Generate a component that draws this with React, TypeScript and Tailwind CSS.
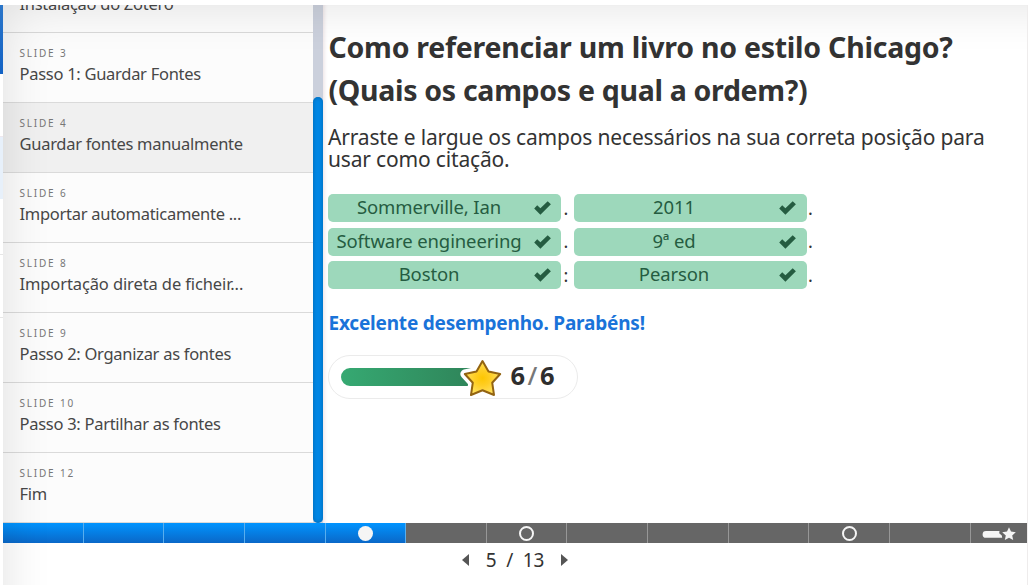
const slides = [
  { label: "SLIDE 3", title: "Passo 1: Guardar Fontes" },
  { label: "SLIDE 4", title: "Guardar fontes manualmente", active: true },
  { label: "SLIDE 6", title: "Importar automaticamente ..." },
  { label: "SLIDE 8", title: "Importação direta de ficheir...", tracking: "tracking-[-0.11px]" },
  { label: "SLIDE 9", title: "Passo 2: Organizar as fontes" },
  { label: "SLIDE 10", title: "Passo 3: Partilhar as fontes" },
  { label: "SLIDE 12", title: "Fim" },
];

const answers = [
  [["Sommerville, Ian", "."], ["2011", "."]],
  [["Software engineering", "."], ["9ª ed", "."]],
  [["Boston", ":"], ["Pearson", "."]],
];

type SlideProps = { label: string; title: string; active?: boolean; tracking?: string };

function SlideLink({ label, title, active, tracking = "tracking-[-0.28px]" }: SlideProps) {
  return (
    <li className={`flex h-[70px] shrink-0 flex-col border-b border-[#dadada] pl-[16.5px] ${active ? "bg-[#f0f0f0]" : ""}`}>
      <span className="mt-[13px] h-[16px] text-[10px] leading-[15px] tracking-[1.8px] text-[#777]">{label}</span>
      <span className={`h-[24px] text-[16.5px] leading-[24px] whitespace-nowrap text-[#474747] ${tracking}`}>{title}</span>
    </li>
  );
}

function Answer({ text, mark, last }: { text: string; mark: string; last: boolean }) {
  return (
    <div className="flex w-[246px] items-center">
      <div className="flex h-[28px] w-[233px] items-center rounded-[5px] bg-[#9dd8bb] text-[#255c41]">
        <span className={`-mt-[2px] text-center text-[18.5px] leading-[26px] tracking-[-0.12px] ${last ? "w-[200px]" : "w-[202px]"}`}>
          {text}
        </span>
        <svg viewBox="0 0 17 14" className={`h-[14px] w-[17px] ${last ? "ml-[4.5px]" : "ml-[3.5px]"}`}>
          <path d="M0.2 7.4 3.2 4.2 6.4 7.2 13.7 0.2 16.9 3.3 6.4 13.8Z" fill="currentColor" />
        </svg>
      </div>
      <span className={`-mt-px text-[18px] leading-[24px] text-[#333] ${last ? "ml-[1px]" : "ml-[2.5px]"}`}>{mark}</span>
    </div>
  );
}

function Segment({ index }: { index: number }) {
  const done = index < 5;
  return (
    <div
      className={`flex h-full items-center justify-center ${index === 12 ? "flex-1" : "w-[80.63px] shrink-0 border-r"} ${
        done ? "border-[#58aeee] bg-linear-to-b from-[#0094ff] to-[#0a68c8]" : "border-[#979797] bg-[#666]"
      }`}
    >
      {index === 4 && <span className="mt-[1px] ml-[1px] size-[15px] rounded-full bg-[#f5f5f5]" />}
      {(index === 6 || index === 10) && <span className="mt-[1px] size-[15px] rounded-full border-2 border-[#f5f5f5]" />}
      {index === 12 && (
        <svg viewBox="0 0 34 14" className="mt-[2px] h-[14px] w-[34px]" fill="#f5f5f5">
          <path d="M4 4H17.5L17.2 6.3 19.8 8.5 20.2 10.8H4A3.4 3.4 0 0 1 4 4Z" />
          <path d="M27 0.2 29 4.6 33.8 5.2 30.2 8.4 31.2 13.1 27 10.7 22.8 13.1 23.8 8.4 20.2 5.2 25 4.6Z" />
        </svg>
      )}
    </div>
  );
}

function Score() {
  return (
    <div className="mt-[19px] flex h-[44px] w-[250px] items-center rounded-full border border-[#ebebeb] pl-[12px]">
      <svg viewBox="0 0 162 42" className="h-[42px] w-[162px] shrink-0">
        <defs>
          <linearGradient id="bar" x1="0" x2="1">
            <stop offset="0" stopColor="#36a972" />
            <stop offset="1" stopColor="#2f855a" />
          </linearGradient>
          <radialGradient id="star">
            <stop offset="0" stopColor="#fdc602" />
            <stop offset="0.45" stopColor="#ffce25" />
            <stop offset="1" stopColor="#ffe15e" />
          </radialGradient>
        </defs>
        <path d="M9 12H130V30H9A9 9 0 0 1 9 12Z" fill="url(#bar)" />
        <path
          d="M141.5 5 147.5 15.5 159.2 18 151.2 26.7 153 39 141.5 34.3 130 39 131.8 26.7 123.8 18 135.5 15.5Z"
          fill="#fff" stroke="#fff" strokeWidth="9" strokeLinejoin="round"
        />
        <path
          d="M141.5 5 147.5 15.5 159.2 18 151.2 26.7 153 39 141.5 34.3 130 39 131.8 26.7 123.8 18 135.5 15.5Z"
          fill="url(#star)" stroke="#936412" strokeWidth="2" strokeLinejoin="round"
        />
      </svg>
      <div className="mb-[4px] ml-[7.5px] flex text-[25.5px] leading-[38px] font-bold text-[#2e2e2e]">
        <span>6</span>
        <span className="mx-[2.5px] font-medium text-[#777]">/</span>
        <span>6</span>
      </div>
    </div>
  );
}

export default function App() {
  return (
    <div className="flex h-[585px] w-[1032px] overflow-hidden bg-white pt-[5px] font-['Noto_Sans','Open_Sans',sans-serif]">
      <div className="flex w-[3px] shrink-0 flex-col">
        <div className="h-[69px] bg-linear-to-b from-[#2b76c9] to-[#1262c4]" />
        <div className="h-[62px]" />
        <div className="h-[63px] border-t border-[#eee7ee] bg-[#e7f0fa]" />
        <div className="h-[56px] border-b border-[#e6e6e6]" />
        <div className="h-[63px] border-b border-[#e6e6e6]" />
      </div>
      <div className="relative flex w-[1025px] shrink-0 flex-col border-r border-[#eeecec]">
        <div className="flex h-[518px] shrink-0">
          <ul className="flex w-[310px] shrink-0 flex-col justify-end overflow-hidden bg-[#fcfcfc]">
            <SlideLink label="SLIDE 2" title="Instalação do Zotero" />
            {slides.map((s) => (
              <SlideLink key={s.label} {...s} />
            ))}
          </ul>
          <div className="flex w-[10px] shrink-0 flex-col bg-[#cbd0dc] pt-[92px]">
            <div className="flex-1 rounded-[5px] bg-[#0087e5] shadow-[inset_0_0_4px_#0066b0]" />
          </div>
          <main className="flex flex-1 flex-col pl-[5px] shadow-[inset_4px_0_4px_-3px_#eadfe3]">
            <h1 className="mt-[21px] pl-[0.5px] text-[28.5px] leading-[43px] font-bold tracking-[-0.25px] whitespace-nowrap text-[#333]">
              Como referenciar um livro no estilo Chicago?
              <br />
              <span className="tracking-[-0.31px]">(Quais os campos e qual a ordem?)</span>
            </h1>
            <p className="mt-[14px] text-[21px] leading-[22px] tracking-[-0.17px] whitespace-nowrap text-[#333]">
              Arraste e largue os campos necessários na sua correta posição para
              <br />
              usar como citação.
            </p>
            <div className="mt-[24px] flex flex-col gap-[5.5px]">
              {answers.map((row) => (
                <div key={row[0][0]} className="flex h-[28px]">
                  {row.map(([text, mark], i) => (
                    <Answer key={text} text={text} mark={mark} last={i === 1} />
                  ))}
                </div>
              ))}
            </div>
            <p className="mt-[21px] pl-[0.5px] text-[19px] leading-[26px] font-bold tracking-[-0.2px] text-[#1a73d9]">
              Excelente desempenho. Parabéns!
            </p>
            <Score />
          </main>
        </div>
        <div className="flex h-[20px] shrink-0">
          {Array.from({ length: 13 }, (_, i) => (
            <Segment key={i} index={i} />
          ))}
        </div>
        <div className="flex h-[34px] items-center justify-center text-[#555]">
          <svg viewBox="0 0 7 12" className="h-[12px] w-[7px]"><path d="M7 0V12L0 6Z" fill="currentColor" /></svg>
          <span className="mx-[17px] text-[19px] leading-[34px] tracking-[-0.2px] [word-spacing:5px] text-[#333]">5 / 13</span>
          <svg viewBox="0 0 7 12" className="h-[12px] w-[7px]"><path d="M0 0V12L7 6Z" fill="currentColor" /></svg>
        </div>
        <div className="pointer-events-none absolute inset-0 shadow-[inset_30px_30px_50px_-30px_rgba(0,0,0,0.12)]" />
      </div>
    </div>
  );
}
